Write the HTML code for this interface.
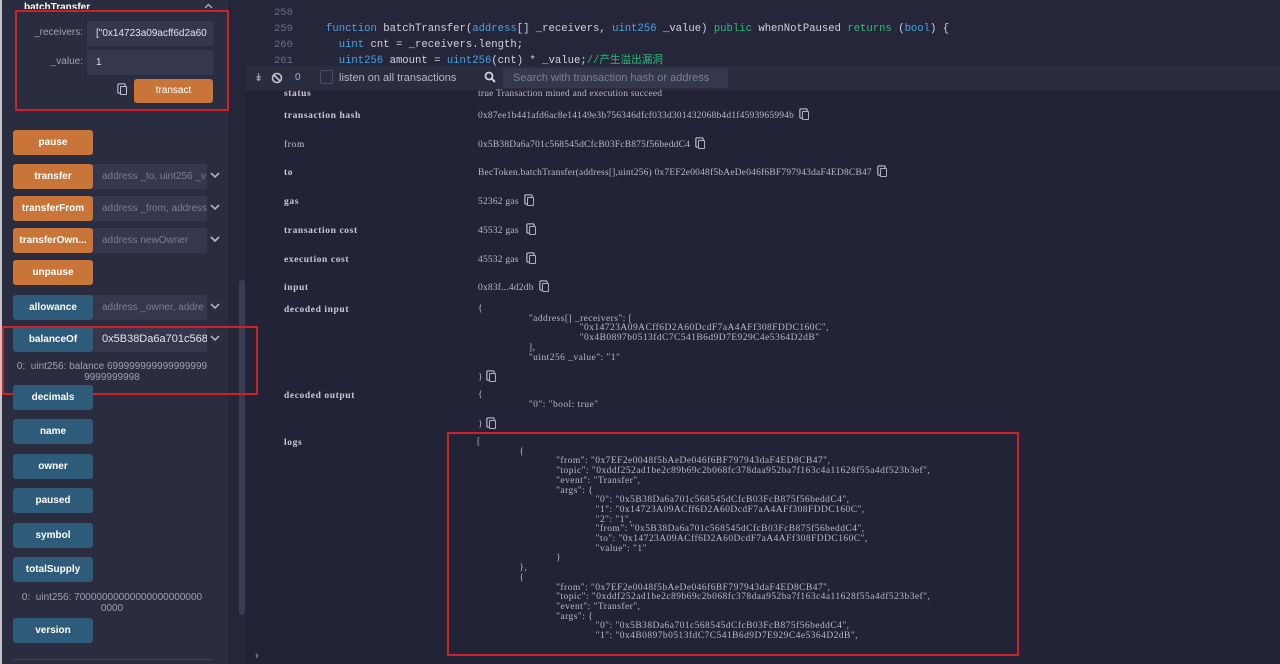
<!DOCTYPE html>
<html><head><meta charset="utf-8"><style>
*{margin:0;padding:0;box-sizing:border-box}
body{width:1280px;height:664px;overflow:hidden;background:#222336;position:relative;font-family:"Liberation Sans",sans-serif}
.a{position:absolute}
.side{left:0;top:0;width:228px;height:664px;background:#2a2c3f}
.btn{position:absolute;left:13px;width:80px;height:25px;border-radius:3px;color:#fff;font-size:10px;font-weight:bold;text-align:center;line-height:25px}
.o{background:#c97539}.b{background:#2e5b7a}
.inp{position:absolute;left:93px;width:114px;height:25px;background:#35374c;color:#7c7f93;font-size:10px;line-height:25px;padding-left:9px;white-space:nowrap;overflow:hidden}
.res{position:absolute;left:20px;width:200px;color:#9fa2b4;font-size:10px;line-height:11px;text-align:center}
.red{position:absolute;border:2px solid #d0202a}
.mono{font-family:"Liberation Mono",monospace;font-size:10.6px;color:#d0d4e0;white-space:pre}
.lab{position:absolute;left:284px;font-family:"Liberation Serif",serif;font-weight:bold;font-size:9.5px;color:#c8cad6;letter-spacing:.6px}
.val{position:absolute;left:478px;font-family:"Liberation Serif",serif;font-size:9.5px;color:#b8bac8;white-space:pre;letter-spacing:.2px}
.j{position:absolute;font-family:"Liberation Serif",serif;font-size:9.5px;line-height:9.7px;color:#b8bac8;white-space:pre;letter-spacing:.45px}
.cp{display:inline-block;width:7px;height:9px;border:1.3px solid #aeb1c0;border-radius:1px;margin-left:8px;vertical-align:middle;box-shadow:-2px -2px 0 -0.5px #222336,-2px -2px 0 .8px #aeb1c0}
</style></head><body>
<div class="a" style="left:0;top:0;width:1280px;height:2px;background:#c4c4c4"></div>
<div class="a side"></div>
<div class="a" style="left:0;top:0;width:2px;height:664px;background:#c4c4c4"></div>
<div class="a" style="left:228px;top:0;width:18px;height:664px;background:#25263a"></div>
<div class="a" style="left:239px;top:280px;width:6px;height:335px;background:#3a3c52;border-radius:3px"></div>
<div class="a" style="left:246px;top:0;width:1034px;height:66px;background:#25263a"></div>

<div class="a" style="left:24px;top:1px;color:#fff;font-size:10px;font-weight:bold;height:8px;overflow:hidden;line-height:14px">batchTransfer</div>
<svg class="a" style="left:204px;top:3px" width="9" height="6"><path d="M1 5 L4.5 1.5 L8 5" stroke="#aaa" stroke-width="1.5" fill="none"/></svg>
<div class="a" style="left:20px;top:27px;width:63px;text-align:right;color:#9fa2b4;font-size:10px">_receivers:</div>
<div class="inp" style="left:87px;top:21px;width:126px;color:#e2e4ee">["0x14723a09acff6d2a60</div>
<div class="a" style="left:20px;top:56px;width:63px;text-align:right;color:#9fa2b4;font-size:10px">_value:</div>
<div class="inp" style="left:87px;top:50px;width:126px;color:#e2e4ee">1</div>
<span class="a cp" style="left:112px;top:86px;border-color:#c0c3d4"></span>
<div class="btn o" style="left:134px;top:79px;width:79px;height:24px;line-height:24px;font-weight:normal">transact</div>
<div class="red" style="left:15px;top:10px;width:214px;height:101px"></div>

<div class="btn o" style="top:130px">pause</div>
<div class="btn o" style="top:164px">transfer</div><div class="inp" style="top:164px">address _to, uint256 _v</div>
<div class="btn o" style="top:196px">transferFrom</div><div class="inp" style="top:196px">address _from, address</div>
<div class="btn o" style="top:228px">transferOwn...</div><div class="inp" style="top:228px">address newOwner</div>
<div class="btn o" style="top:260px">unpause</div>
<div class="btn b" style="top:295px">allowance</div><div class="inp" style="top:295px">address _owner, addre</div>
<div class="btn b" style="top:327px">balanceOf</div><div class="inp" style="top:327px;color:#e2e4ee;font-size:11px">0x5B38Da6a701c568</div>
<div class="res" style="top:361px;left:12px">0:&nbsp; uint256: balance 699999999999999999<br>9999999998</div>
<div class="red" style="left:2px;top:326px;width:256px;height:69px"></div>
<div class="btn b" style="top:385px">decimals</div>
<div class="btn b" style="top:419px">name</div>
<div class="btn b" style="top:454px">owner</div>
<div class="btn b" style="top:488px">paused</div>
<div class="btn b" style="top:523px">symbol</div>
<div class="btn b" style="top:557px">totalSupply</div>
<div class="res" style="top:592px;left:12px">0:&nbsp; uint256: 70000000000000000000000<br>0000</div>
<div class="btn b" style="top:618px">version</div>
<div class="a" style="left:13px;top:659px;width:200px;height:1px;background:#3e4055"></div>
<svg class="a" style="left:210px;top:170px" width="10" height="80"><g stroke="#aeb1c0" stroke-width="1.6" fill="none"><path d="M1 3 L5 7 L9 3"/><path d="M1 35 L5 39 L9 35"/><path d="M1 67 L5 71 L9 67"/></g></svg>
<svg class="a" style="left:210px;top:234px" width="10" height="110"><g stroke="#aeb1c0" stroke-width="1.6" fill="none"><path d="M1 3 L5 7 L9 3"/><path d="M1 70 L5 74 L9 70"/><path d="M1 102 L5 106 L9 102"/></g></svg>

<div class="a mono" style="left:274px;top:5px;line-height:16px;color:#6b6e84;font-size:10.5px">258
259
260
261</div>
<div class="a mono" style="left:326px;top:21px;line-height:16px"><span style="color:#4aa3df">function</span> batchTransfer(<span style="color:#4aa3df">address</span>[] _receivers, <span style="color:#4aa3df">uint256</span> _value) <span style="color:#2bbb77">public</span> whenNotPaused <span style="color:#2bbb77">returns</span> (<span style="color:#4aa3df">bool</span>) {
  <span style="color:#4aa3df">uint</span> cnt = _receivers.length;
  <span style="color:#4aa3df">uint256</span> amount = <span style="color:#4aa3df">uint256</span>(cnt) * _value;<span style="color:#2bbb77;font-family:'Liberation Mono','Noto Sans CJK SC',monospace">//产生溢出漏洞</span></div>

<div class="a" style="left:246px;top:66px;width:1034px;height:24px;background:#2a2c3f"></div>
<div class="a" style="left:254px;top:71px;color:#aeb1c0;font-size:11px">&#8609;</div>
<svg class="a" style="left:271px;top:72px" width="12" height="12"><circle cx="6" cy="6" r="4.5" stroke="#c0c3d0" stroke-width="1.6" fill="none"/><path d="M3 3 L9 9" stroke="#c0c3d0" stroke-width="1.6"/></svg>
<div class="a" style="left:295px;top:72px;color:#aeb1c0;font-size:10px">0</div>
<div class="a" style="left:320px;top:70px;width:13px;height:14px;border:1px solid #4a4d63;border-radius:2px"></div>
<div class="a" style="left:339px;top:72px;color:#b4b7c6;font-size:11px">listen on all transactions</div>
<svg class="a" style="left:484px;top:71px" width="12" height="12"><circle cx="5" cy="5" r="3.5" stroke="#d0d2dc" stroke-width="1.8" fill="none"/><path d="M7.5 7.5 L11 11" stroke="#d0d2dc" stroke-width="2"/></svg>
<div class="a" style="left:503px;top:68px;width:225px;height:20px;background:#35374c;color:#7c7f93;font-size:11px;line-height:20px;padding-left:10px">Search with transaction hash or address</div>

<div class="lab" style="top:89px;height:8px;overflow:hidden">status</div>
<div class="val" style="top:89px;height:8px;overflow:hidden">true Transaction mined and execution succeed</div>
<div class="lab" style="top:111px">transaction hash</div><div class="val" style="top:111px">0x87ee1b441afd6ac8e14149e3b756346dfcf033d301432068b4d1f4593965994b<span class="cp"></span></div>
<div class="lab" style="top:140px;font-weight:normal">from</div><div class="val" style="top:140px">0x5B38Da6a701c568545dCfcB03FcB875f56beddC4<span class="cp"></span></div>
<div class="lab" style="top:168px">to</div><div class="val" style="top:168px">BecToken.batchTransfer(address[],uint256) 0x7EF2e0048f5bAeDe046f6BF797943daF4ED8CB47<span class="cp"></span></div>
<div class="lab" style="top:197px">gas</div><div class="val" style="top:197px">52362 gas<span class="cp"></span></div>
<div class="lab" style="top:226px">transaction cost</div><div class="val" style="top:226px">45532 gas <span class="cp"></span></div>
<div class="lab" style="top:255px">execution cost</div><div class="val" style="top:255px">45532 gas <span class="cp"></span></div>
<div class="lab" style="top:283px">input</div><div class="val" style="top:283px">0x83f...4d2db<span class="cp"></span></div>
<div class="lab" style="top:305px">decoded input</div>
<div class="j" style="left:478px;top:305px">{
                  "address[] _receivers": [
                                    "0x14723A09ACff6D2A60DcdF7aA4AFf308FDDC160C",
                                    "0x4B0897b0513fdC7C541B6d9D7E929C4e5364D2dB"
                  ],
                  "uint256 _value": "1"

}<span class="cp" style="margin-left:6px"></span></div>
<div class="lab" style="top:391px">decoded output</div>
<div class="j" style="left:478px;top:391px">{
                  "0": "bool: true"

}<span class="cp" style="margin-left:6px"></span></div>
<div class="lab" style="top:438px">logs</div>
<div class="j" style="left:477px;top:438px">[
               {
                            "from": "0x7EF2e0048f5bAeDe046f6BF797943daF4ED8CB47",
                            "topic": "0xddf252ad1be2c89b69c2b068fc378daa952ba7f163c4a11628f55a4df523b3ef",
                            "event": "Transfer",
                            "args": {
                                          "0": "0x5B38Da6a701c568545dCfcB03FcB875f56beddC4",
                                          "1": "0x14723A09ACff6D2A60DcdF7aA4AFf308FDDC160C",
                                          "2": "1",
                                          "from": "0x5B38Da6a701c568545dCfcB03FcB875f56beddC4",
                                          "to": "0x14723A09ACff6D2A60DcdF7aA4AFf308FDDC160C",
                                          "value": "1"
                            }
               },
               {
                            "from": "0x7EF2e0048f5bAeDe046f6BF797943daF4ED8CB47",
                            "topic": "0xddf252ad1be2c89b69c2b068fc378daa952ba7f163c4a11628f55a4df523b3ef",
                            "event": "Transfer",
                            "args": {
                                          "0": "0x5B38Da6a701c568545dCfcB03FcB875f56beddC4",
                                          "1": "0x4B0897b0513fdC7C541B6d9D7E929C4e5364D2dB",</div>
<div class="a" style="left:246px;top:650px;width:1034px;height:14px;background:#222336"></div>
<div class="red" style="left:447px;top:432px;width:572px;height:224px"></div>
<div class="a" style="left:255px;top:650px;color:#aeb1c0;font-size:11px">&#8250;</div>
</body></html>
